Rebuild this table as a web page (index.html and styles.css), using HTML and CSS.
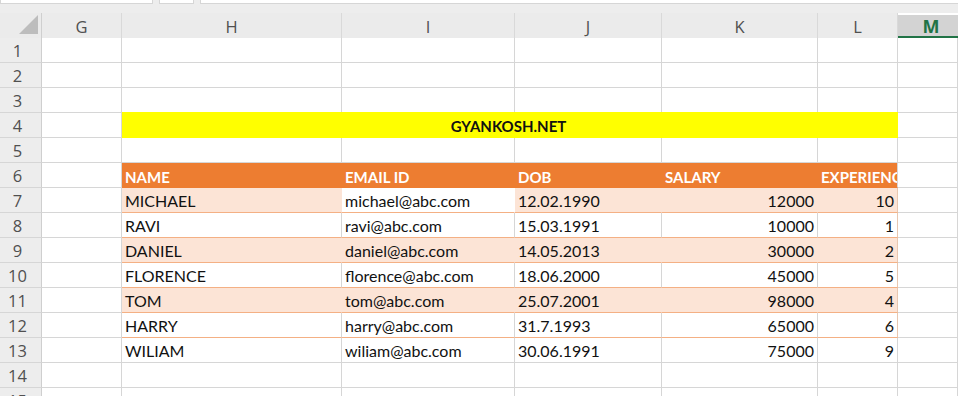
FILE: index.html
```html
<!DOCTYPE html>
<html>
<head>
<meta charset="utf-8">
<link rel="stylesheet" href="styles.css">
</head>
<body>
<div class="topbar">
  <div class="box box-name"></div>
  <div class="box box-fx"></div>
  <div class="box box-formula"></div>
</div>
<div class="sheet">
  <!-- column headers -->
  <div class="corner"><svg width="19" height="19" viewBox="0 0 19 19"><polygon points="19,0 19,19 0,19" fill="#bdbdbd"/></svg></div>
  <div class="ch">G</div>
  <div class="ch">H</div>
  <div class="ch">I</div>
  <div class="ch">J</div>
  <div class="ch">K</div>
  <div class="ch">L</div>
  <div class="ch ch-active">M</div>

  <!-- row 1 -->
  <div class="rh">1</div><div class="c"></div><div class="c"></div><div class="c"></div><div class="c"></div><div class="c"></div><div class="c"></div><div class="c"></div>
  <!-- row 2 -->
  <div class="rh">2</div><div class="c"></div><div class="c"></div><div class="c"></div><div class="c"></div><div class="c"></div><div class="c"></div><div class="c"></div>
  <!-- row 3 -->
  <div class="rh">3</div><div class="c"></div><div class="c"></div><div class="c"></div><div class="c"></div><div class="c"></div><div class="c"></div><div class="c"></div>
  <!-- row 4 -->
  <div class="rh">4</div><div class="c"></div><div class="c title">GYANKOSH.NET</div><div class="c"></div>
  <!-- row 5 -->
  <div class="rh">5</div><div class="c"></div><div class="c"></div><div class="c"></div><div class="c"></div><div class="c"></div><div class="c"></div><div class="c"></div>
  <!-- row 6 -->
  <div class="rh">6</div><div class="c"></div>
  <div class="c th">NAME</div><div class="c th">EMAIL ID</div><div class="c th">DOB</div><div class="c th">SALARY</div><div class="c th th-last">EXPERIENCE</div>
  <div class="c"></div>
  <!-- row 7 -->
  <div class="rh">7</div><div class="c"></div>
  <div class="c td pe">MICHAEL</div><div class="c td pe pe-white">michael@abc.com</div><div class="c td pe">12.02.1990</div><div class="c td pe num">12000</div><div class="c td pe num last">10</div>
  <div class="c"></div>
  <!-- row 8 -->
  <div class="rh">8</div><div class="c"></div>
  <div class="c td">RAVI</div><div class="c td">ravi@abc.com</div><div class="c td">15.03.1991</div><div class="c td num">10000</div><div class="c td num last">1</div>
  <div class="c"></div>
  <!-- row 9 -->
  <div class="rh">9</div><div class="c"></div>
  <div class="c td pe">DANIEL</div><div class="c td pe">daniel@abc.com</div><div class="c td pe">14.05.2013</div><div class="c td pe num">30000</div><div class="c td pe num last">2</div>
  <div class="c"></div>
  <!-- row 10 -->
  <div class="rh">10</div><div class="c"></div>
  <div class="c td">FLORENCE</div><div class="c td">florence@abc.com</div><div class="c td">18.06.2000</div><div class="c td num">45000</div><div class="c td num last">5</div>
  <div class="c"></div>
  <!-- row 11 -->
  <div class="rh">11</div><div class="c"></div>
  <div class="c td pe">TOM</div><div class="c td pe">tom@abc.com</div><div class="c td pe">25.07.2001</div><div class="c td pe num">98000</div><div class="c td pe num last">4</div>
  <div class="c"></div>
  <!-- row 12 -->
  <div class="rh">12</div><div class="c"></div>
  <div class="c td">HARRY</div><div class="c td">harry@abc.com</div><div class="c td">31.7.1993</div><div class="c td num">65000</div><div class="c td num last">6</div>
  <div class="c"></div>
  <!-- row 13 -->
  <div class="rh">13</div><div class="c"></div>
  <div class="c td end">WILIAM</div><div class="c td end">wiliam@abc.com</div><div class="c td end">30.06.1991</div><div class="c td end num">75000</div><div class="c td end num">9</div>
  <div class="c"></div>
  <!-- row 14 -->
  <div class="rh">14</div><div class="c"></div><div class="c"></div><div class="c"></div><div class="c"></div><div class="c"></div><div class="c"></div><div class="c"></div>
  <!-- row 15 -->
  <div class="rh">15</div><div class="c"></div><div class="c"></div><div class="c"></div><div class="c"></div><div class="c"></div><div class="c"></div><div class="c"></div>
</div>
</body>
</html>
```
FILE: styles.css
```css
* { box-sizing: border-box; }
html, body { margin: 0; padding: 0; }
body {
  width: 958px;
  height: 396px;
  overflow: hidden;
  background: #ffffff;
  font-family: Lato, "Liberation Sans", sans-serif;
}
.topbar {
  height: 13px;
  background: #ededed;
  display: flex;
  gap: 6px;
  align-items: flex-start;
}
.box {
  height: 4px;
  background: #ffffff;
  border: 1px solid #d6d6d6;
  border-top: none;
}
.box-name { width: 153px; }
.box-fx { width: 35px; }
.box-formula { flex: 1; border-right: none; }

.sheet {
  display: grid;
  grid-template-columns: 42px 80px 220px 173px 147px 156px 80px 60px;
  grid-template-rows: 25px;
  grid-auto-rows: 25px;
}
.corner {
  background: #ebebeb;
  border-right: 1px solid #cfcfcf;
  display: flex;
  align-items: flex-start;
  justify-content: flex-end;
  padding: 2px 3px 0 0;
}
.ch {
  background: #ebebeb;
  border-right: 1px solid #d9d9d9;
  font-family: "Open Sans", "Noto Sans", sans-serif;
  font-size: 16.5px;
  color: #505050;
  display: flex;
  align-items: center;
  justify-content: center;
  padding-top: 2px;
}
.ch-active {
  background: #d3d3d3;
  border-right: none;
  border-bottom: 2px solid #217346;
  color: #217346;
  font-weight: 700;
  font-size: 18px;
  font-family: "Open Sans", sans-serif;
  margin-top: 2px;
  padding-top: 0;
  padding-left: 6px;
}
.rh {
  background: #ededed;
  border-right: 1px solid #cfcfcf;
  border-bottom: 1px solid #d6d6d6;
  font-family: "Open Sans", "Noto Sans", sans-serif;
  font-size: 16.5px;
  color: #505050;
  display: flex;
  align-items: center;
  justify-content: center;
  padding-right: 6px;
}
.c {
  border-right: 1px solid #d6d6d6;
  border-bottom: 1px solid #d6d6d6;
  font-size: 16px;
  line-height: 24px;
  color: #111111;
  white-space: nowrap;
  overflow: hidden;
}
.title {
  grid-column: span 5;
  background: #ffff00;
  border-right-color: #ffff00;
  border-bottom-color: #ffff00;
  margin-top: -1px;
  font-size: 15px;
  font-weight: 700;
  text-align: center;
  padding-top: 2px;
  padding-right: 2px;
}
.th {
  background: #ed7d31;
  border-right-color: #ed7d31;
  border-bottom-color: #ed7d31;
  color: #ffffff;
  font-size: 15px;
  font-weight: 700;
  padding-left: 3px;
  padding-top: 2px;
}
.th-last { border-right-color: #d6d6d6; }
.td {
  padding: 1px 3px 0 3px;
  border-bottom-color: #f4b084;
}
.pe {
  background: #fce4d6;
  border-right-color: #fce4d6;
}
.pe-white {
  background: #ffffff;
  border-right-color: #ffffff;
}
.last { border-right-color: #e8c7b0; }
.num { text-align: right; }
.end { border-bottom-color: #d6d6d6; }
```
